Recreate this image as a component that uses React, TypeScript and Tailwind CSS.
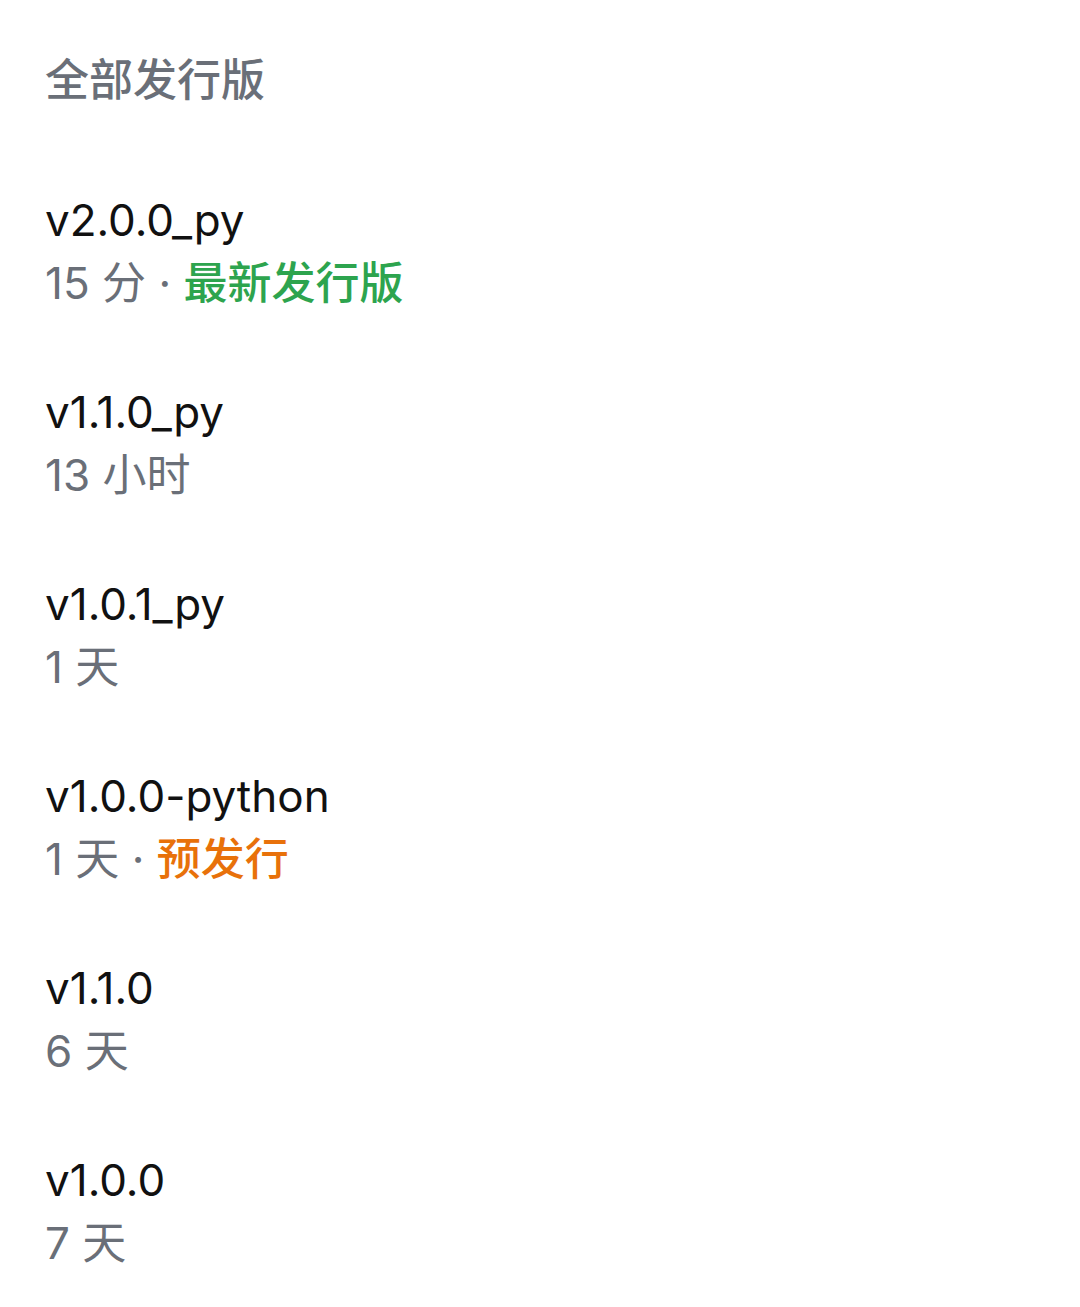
const releases = [
  { tag: "v2.0.0_py", age: "15 分", badge: { text: "最新发行版", color: "text-[#2da44e]" } },
  { tag: "v1.1.0_py", age: "13 小时" },
  { tag: "v1.0.1_py", age: "1 天" },
  { tag: "v1.0.0-python", age: "1 天", badge: { text: "预发行", color: "text-[#e8710a]" } },
  { tag: "v1.1.0", age: "6 天" },
  { tag: "v1.0.0", age: "7 天" },
];

export default function App() {
  return (
    <div
      className="min-h-[1307px] w-[1080px] bg-white px-[45px]"
      style={{ fontFamily: 'Inter, "Noto Sans CJK SC", sans-serif' }}>
      <h2 className="pt-[48px] pb-[44px] text-[44px] leading-[64px] font-medium text-[#6a6f78]">
        全部发行版
      </h2>
      <ul>
        {releases.map((r) => (
          <li key={r.tag} className="py-[33px] text-[44px] leading-[63px]">
            <div className="text-[#111111]">{r.tag}</div>
            <div className="text-[#6a6f78]">
              {r.age}
              {r.badge && (
                <>
                  <span> · </span>
                  <span className={`${r.badge.color} font-medium`}>{r.badge.text}</span>
                </>
              )}
            </div>
          </li>
        ))}
      </ul>
    </div>
  );
}
